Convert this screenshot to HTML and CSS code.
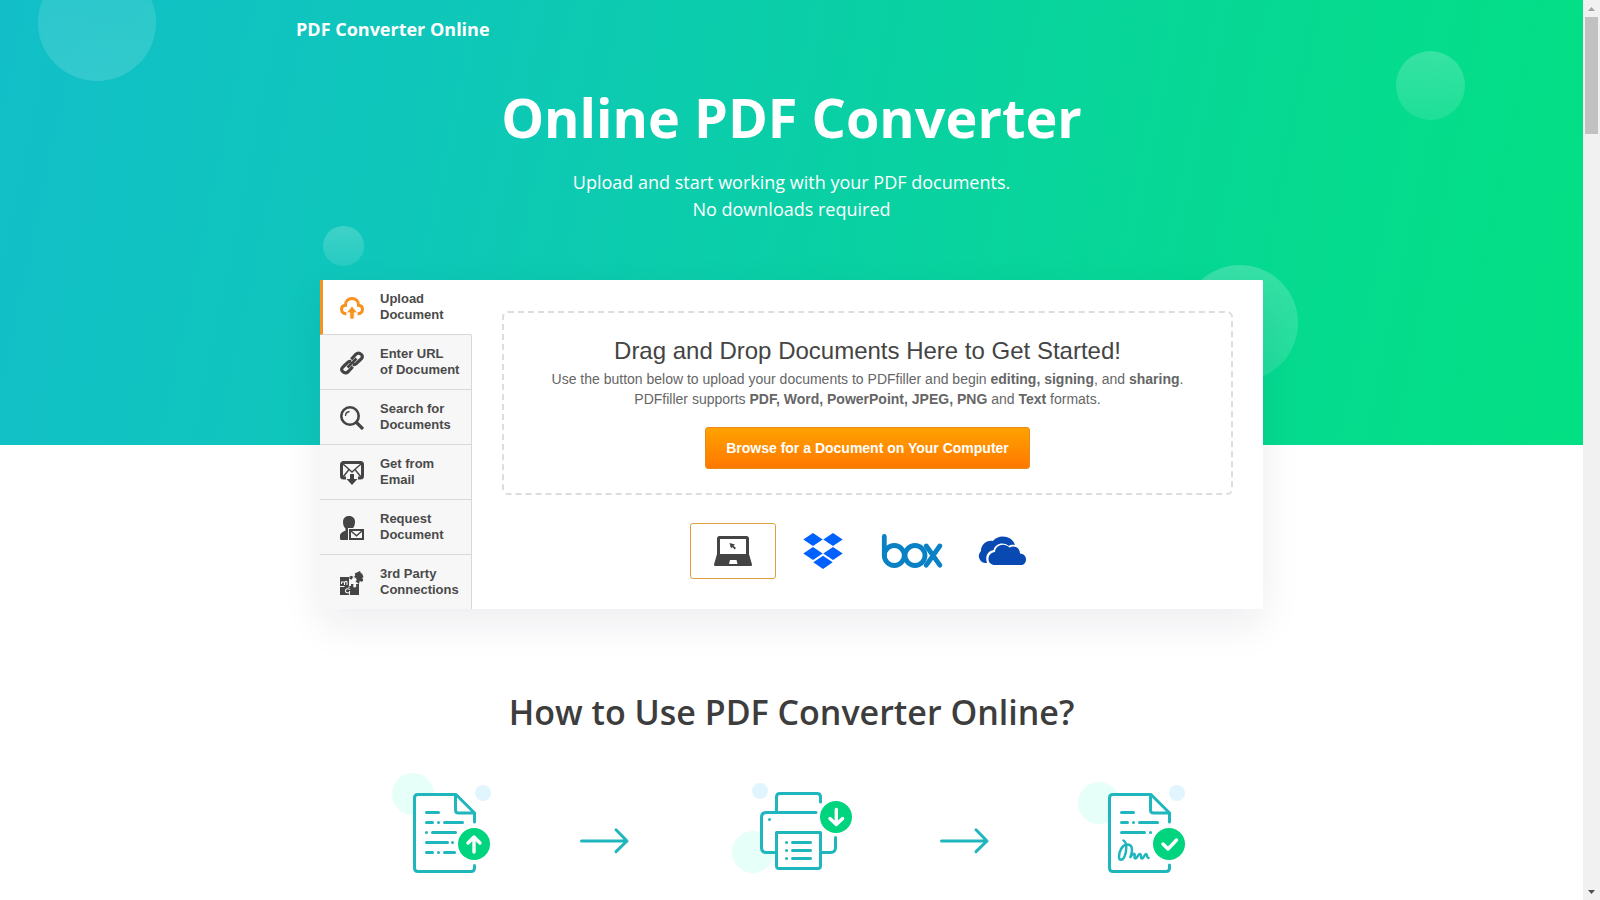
FILE: index.html
```html
<!DOCTYPE html>
<html lang="en">
<head>
<meta charset="utf-8">
<title>PDF Converter Online</title>
<link rel="stylesheet" href="styles.css">
</head>
<body>
<div class="window">
<div class="page">
  <header class="hero">
    <i class="bubble bubble-a"></i><i class="bubble bubble-b"></i><i class="bubble bubble-c"></i><i class="bubble bubble-d"></i>
    <div class="brand">PDF Converter Online</div>
    <h1 class="hero-title">Online PDF Converter</h1>
    <p class="hero-text">Upload and start working with your PDF documents.<br>No downloads required</p>
  </header>
  <section class="card">
    <nav class="tabs">
      <a class="tab tab-active">
        <svg class="tab-icon" width="24" height="24" viewBox="0 0 24 24"><path d="M6.500 17.800C3.500 17.800 1.500 16 1.500 13.300S3.300 9.500 5.500 9.300C5 5.500 8 2.500 12 2.500s7 3 6.500 6.800c2.200.2 4 1.300 4 4s-2 4.500-5 4.500" fill="none" stroke="#f7931e" stroke-width="3"/><path d="M12 10l5.500 6.800H14.200V23H9.800v-6.200H6.500z" fill="#f7931e" stroke="#fff" stroke-width=".8"/></svg>
        <span>Upload<br>Document</span></a>
      <a class="tab">
        <svg class="tab-icon" width="24" height="24" viewBox="0 0 24 24" fill="none" stroke="#444" stroke-width="3.200"><path d="M11.300 8.300 15.600 3.500Q18.500.8 21.200 3.300T20.300 8.800L16 12.800Q14.500 14 12.800 13.600M12.700 15.700 8.400 20.500Q5.500 23.200 2.800 20.700T3.700 15.200L8 11.200Q9.500 10 11.200 10.400"/><path d="M7.500 16.500l9-9" stroke-width="2.600"/></svg>
        <span>Enter URL<br>of Document</span></a>
      <a class="tab">
        <svg class="tab-icon" width="24" height="24" viewBox="0 0 24 24" fill="none" stroke="#444"><circle cx="10" cy="10" r="8.700" stroke-width="2.600"/><path d="M16 16l7 7" stroke-width="3.200"/><path d="M5.500 10A4.500 4.500 0 0 1 9.500 5.500" stroke-width="1.300"/></svg>
        <span>Search for<br>Documents</span></a>
      <a class="tab">
        <svg class="tab-icon" width="24" height="24" viewBox="0 0 24 24"><path d="M6 17H3.500a2 2 0 0 1-2-2V3.500a2 2 0 0 1 2-2h17a2 2 0 0 1 2 2V15a2 2 0 0 1-2 2H18" fill="none" stroke="#444" stroke-width="3"/><path d="M3 3l9 8 9-8M3 16l6-7.500M21 16l-6-7.500" fill="none" stroke="#444" stroke-width="1.500"/><path d="M10 13h4v5h3.500L12 24l-5.500-6H10z" fill="#444"/></svg>
        <span>Get from<br>Email</span></a>
      <a class="tab">
        <svg class="tab-icon" width="24" height="24" viewBox="0 0 24 24"><path d="M9 0c4 0 6 2.500 6 6 0 2.500-.8 5-2.500 6.500V13H9v11H1.500C.3 24 0 23.300 0 22.500V20c0-2.500 1.500-3.500 5.500-5.500v-2C3.800 11 3 8.500 3 6c0-3.500 2-6 6-6z" fill="#444"/><path d="M8 12h16v12H8z" fill="#f7f7f7"/><path d="M10 14h13v9H10z" fill="#f7f7f7" stroke="#444" stroke-width="2"/><path d="M11 15l5.500 4.800L22 15" fill="none" stroke="#444" stroke-width="1.400"/></svg>
        <span>Request<br>Document</span></a>
      <a class="tab">
        <svg class="tab-icon" width="24" height="24" viewBox="0 0 24 24"><path d="M0 6h9v9h2v-2h2.500q-1 3.500 1.200 3.500t1.300-3.500H19v11H0z" fill="#444"/><path d="M9.500 5.500 12 4.800q1 2 2.500.8t.2-3L20 0l1 2.500 1-.3 1.500 4-1.500.8q2 1.500.8 3t-3-.2L19 13l-3.500-2.500q2.500-2-.2-3.800t-3.300 1.800L9.500 8z" fill="#444"/><path d="M1.500 13V11h4M4.500 14v-2.500q2.500-2.500 2.500 0V14M0 15.500h4.500M9 15.500v1.500M10 18.500q-4-2-4.500 1t4.500 2M9.500 20v4" fill="none" stroke="#f7f7f7" stroke-width="1.100"/></svg>
        <span>3rd Party<br>Connections</span></a>
    </nav>
    <div class="panel">
      <div class="dropzone">
        <h2 class="drop-title">Drag and Drop Documents Here to Get Started!</h2>
        <p class="drop-text">Use the button below to upload your documents to PDFfiller and begin <b>editing, signing</b>, and <b>sharing</b>.<br>PDFfiller supports <b>PDF, Word, PowerPoint, JPEG, PNG</b> and <b>Text</b> formats.</p>
        <button class="browse">Browse for a Document on Your Computer</button>
      </div>
      <div class="sources">
        <div class="source source-active">
          <svg width="38" height="30" viewBox="0 0 38 30"><path d="M5.500 0h27C34 0 35 1 35 2.500V18l3 10.500c.2.900-.3 1.500-1.200 1.500H1.200C.3 30 0 29.400 0 28.500L3 18V2.500C3 1 4 0 5.500 0z" fill="#444"/><path d="M6 3h26v15H6zM16 24h6.500l1 4h-8.500z" fill="#fff"/><path d="M15.500 7l5.500 1.500-1.500 1.300 2.500 2.300-1.300 1.300-2.400-2.400-1.300 1.500z" fill="#444"/></svg>
        </div>
        <svg class="source-dropbox" width="40" height="36" viewBox="0 0 40 36" fill="#0061fe"><path d="M10 0l9.700 6.500L10 13 .3 6.500zM30 0l9.700 6.500L30 13l-9.700-6.500zM10 14l9.700 6.500L10 27 .3 20.500zM30 14l9.700 6.500L30 27l-9.700-6.500zM20 22.700l9.700 6.600L20 36l-9.700-6.700z"/></svg>
        <svg class="source-box" width="62" height="34" viewBox="0 0 62 34" fill="none" stroke="#0a81c4" stroke-width="4.800" stroke-linecap="round"><path d="M3.300 2.500V22"/><circle cx="13.300" cy="21.500" r="10"/><circle cx="34" cy="21.500" r="10"/><path d="M45.300 12l13.500 19.200M58.800 12 45.300 31.200"/></svg>
        <svg class="source-cloud" width="48" height="29" viewBox="0 0 48 29" fill="#094ab2"><path d="M9 27H7A7 7 0 0 1 3 15C3 9 8 4 15 5 20-2 34-1 37 9c-4-.5-5 .3-6 1-6-5-14-2-15.500 4C9 15 7 21 9 27z"/><path d="M17 29c-4 0-6.500-2.500-6.500-6 0-3.800 2.500-6.500 6.500-7 .5-7 9-10 14.500-4.500C37 8.500 42 12 42 17.500c3.500.2 6 2.500 6 5.700 0 3.500-2 5.800-5.500 5.800z"/></svg>
      </div>
    </div>
  </section>
  <section class="how">
    <h2 class="how-title">How to Use PDF Converter Online?</h2>
    <div class="steps">
      <svg class="step-one" width="105" height="110" viewBox="10 10 105 110" fill="none">
        <circle cx="33" cy="34" r="21" fill="#e6fff8"/><circle cx="103" cy="33" r="8" fill="#e1f5fe"/>
        <path class="ink" fill="#fff" d="M94.500 105.500v2.500q0 3.500-3.500 3.500H38q-3.500 0-3.500-3.500V38q0-3.500 3.500-3.500H76L94.500 53V62"/>
        <path class="ink" d="M75.500 35V50q0 3 3 3H94M46.500 52.500h12M46.500 62.500h6m6 0h.01m6 0h18M46.500 72.500h.01m6 0h23M46.500 82.500h21m5 0h.01M46.500 92.500h6m6 0h.01m6 0h10"/>
        <circle cx="94" cy="84" r="16" fill="#00d47e"/><path class="mark" d="M94 92V77.500M88 83l6-6 6 6"/>
      </svg>
      <svg class="arrow" width="52" height="30" viewBox="199 66 52 30"><path class="ink" fill="none" d="M201.500 81H247M236 69.800 247 81l-11 10.700"/></svg>
      <svg class="step-two" width="125" height="110" viewBox="10 10 125 110" fill="none">
        <circle cx="33" cy="92" r="21" fill="#e6fff8"/><circle cx="40" cy="31" r="8" fill="#e1f5fe"/>
        <path class="ink" fill="#fff" d="M96 52.500H46.500q-5 0-5 5V87.500q0 5 5 5H110.500q5 0 5-5V77.500"/>
        <path class="ink" d="M56.500 52V37q0-3.500 3.500-3.500H97q3.500 0 3.500 3.500V42M49.500 59.500h.01"/>
        <path class="ink" fill="#fff" d="M56.500 72.500h44V106q0 2.500-2.500 2.500H59q-2.500 0-2.500-2.500z"/>
        <path class="ink" d="M66.500 82.500h.01m6 0h18M66.500 90.500h.01m6 0h18M66.500 98.500h.01m6 0h18"/>
        <circle cx="116" cy="57" r="16" fill="#00d47e"/><path class="mark" d="M116.300 49.500V64M110 58.500l6.300 6 6.300-6"/>
      </svg>
      <svg class="arrow arrow-two" width="52" height="30" viewBox="199 66 52 30"><path class="ink" fill="none" d="M201.500 81H247M236 69.800 247 81l-11 10.700"/></svg>
      <svg class="step-three" width="112" height="110" viewBox="16 10 112 110" fill="none">
        <circle cx="39" cy="43" r="21" fill="#e6fff8"/><circle cx="117" cy="33" r="8" fill="#e1f5fe"/>
        <path class="ink" fill="#fff" d="M109.500 105v3q0 3.500-3.500 3.500H53q-3.500 0-3.500-3.500V38q0-3.500 3.500-3.500H91L109.500 53V62"/>
        <path class="ink" d="M90.500 35V50q0 3 3 3H109M61.500 52.500h12M61.500 62.500h6m6 0h.01m6 0h18M61.500 72.500h23m6 0h.01"/>
        <path class="signature" d="M63.500 80.500c4 2 3 12 1 16-2 4.500-5.500 4-5.500.5 0-6 3.500-12.500 8-12.500 6 0 6 6 3 13.500 1.500-3 3.500-5 4.500-4s-1 4.500 1 4.500 2.500-5 4.500-4.500 0 4.500 2 4.500 2.500-4.500 4-4.500.5 3.500 2.500 4"/>
        <circle cx="109" cy="84" r="16" fill="#00d47e"/><path class="mark" d="M103 84l5 5 8.500-9"/>
      </svg>
    </div>
  </section>
</div>
<aside class="scrollbar">
  <svg width="17" height="17" viewBox="0 0 17 17"><path d="M5 11l3.500-4 3.500 4z" fill="#a3a3a3"/></svg>
  <div class="thumb"></div>
  <svg class="scroll-down" width="17" height="17" viewBox="0 0 17 17"><path d="M5 7l3.500 4L12 7z" fill="#505050"/></svg>
</aside>
</div>
</body>
</html>
```
FILE: styles.css
```css
* { box-sizing: border-box; }
body { margin: 0; background: #fff; font-family: "Open Sans", sans-serif; overflow: hidden; }
h1, h2, p { margin: 0; font-weight: 400; }
svg { display: block; flex: none; }
.window { display: flex; width: 1600px; height: 900px; overflow: hidden; }
.page { width: 1583px; height: 900px; overflow: hidden; }
.hero { position: relative; height: 445px; overflow: hidden; color: #fff; background: linear-gradient(102deg, #12bfc9 0%, #0ec7b9 27%, #0acfa6 50%, #06d894 74%, #03e083 100%); }
.bubble { position: absolute; border-radius: 50%; background: linear-gradient(rgba(255,255,255,.2), rgba(255,255,255,.1)); }
.bubble-a { left: 38px; top: -36px; width: 118px; height: 117px; background: linear-gradient(rgba(255,255,255,.1), rgba(255,255,255,.14)); }
.bubble-b { left: 323px; top: 226px; width: 41px; height: 40px; }
.bubble-c { left: 1396px; top: 51px; width: 69px; height: 69px; }
.bubble-d { left: 1182px; top: 265px; width: 116px; height: 116px; }
.brand { position: relative; padding: 17px 0 0 296px; font-size: 18px; line-height: 25px; font-weight: 700; }
.hero-title { position: relative; margin-top: 38px; text-align: center; font-size: 54px; line-height: 75px; font-weight: 700; }
.hero-text { position: relative; margin-top: 14px; text-align: center; font-size: 18px; line-height: 27px; }
.card { position: relative; display: flex; width: 943px; height: 329px; margin: -165px 0 0 320px; background: #fff; border-radius: 1px; box-shadow: 0 15px 40px rgba(20,20,60,.08); font-family: "Liberation Sans", Arial, sans-serif; }
.tabs { width: 152px; }
.tab { display: flex; align-items: center; height: 55px; padding: 0 0 1px 20px; gap: 16px; background: #f7f7f7; border-right: 1px solid #d8d8d8; border-bottom: 1px solid #d8d8d8; color: #4a4a4a; font-size: 13px; line-height: 16px; font-weight: 700; }
.tab:last-child { height: 54px; border-bottom: 0; }
.tab-icon { margin-top: 3px; }
.tab span { white-space: nowrap; }
.tab-active { background: #fff; border-right-color: #fff; padding-left: 17px; border-left: 3px solid #f7931e; }
.panel { flex: 1; padding: 31px 30px 0; }
.dropzone { display: flex; flex-direction: column; align-items: center; height: 184px; border: 2px dashed #ddd; border-radius: 6px; text-align: center; }
.drop-title { margin-top: 23px; font-size: 24px; line-height: 30px; color: #444; }
.drop-text { margin-top: 3px; font-size: 14px; line-height: 20px; color: #666; }
.browse { width: 325px; height: 42px; margin-top: 18px; padding: 0; border: 1px solid #e88a1a; border-radius: 3px; background: linear-gradient(#ffa200, #ff7800); color: #fff; font: bold 14px "Liberation Sans", Arial, sans-serif; }
.sources { display: flex; align-items: center; height: 56px; margin: 28px 0 0 188px; }
.source { display: flex; align-items: center; justify-content: center; width: 86px; height: 56px; }
.source-active { border: 1px solid #e0a040; border-radius: 3px; }
.source-dropbox { margin-left: 27px; }
.source-box { margin-left: 38px; }
.source-cloud { margin: 0 0 2px 35px; }
.how { padding-top: 76px; }
.how-title { height: 55px; text-align: center; font-size: 34px; line-height: 55px; font-weight: 600; color: #3d3d3d; }
.steps { display: flex; padding: 30px 0 0 390px; }
.arrow { margin: 56px 0 0 84px; }
.step-two { margin-left: 99px; }
.step-three { margin-left: 85px; }
.ink { stroke: #1fb6bd; stroke-width: 3; stroke-linecap: round; stroke-linejoin: round; }
.mark { stroke: #fff; stroke-width: 3.4; stroke-linecap: round; stroke-linejoin: round; }
.signature { stroke: #1fb6bd; stroke-width: 2.5; stroke-linecap: round; }
.scrollbar { display: flex; flex-direction: column; align-items: center; width: 17px; background: #f1f1f1; }
.thumb { width: 13px; height: 117px; background: #c1c1c1; }
.scroll-down { margin-top: auto; }
```
